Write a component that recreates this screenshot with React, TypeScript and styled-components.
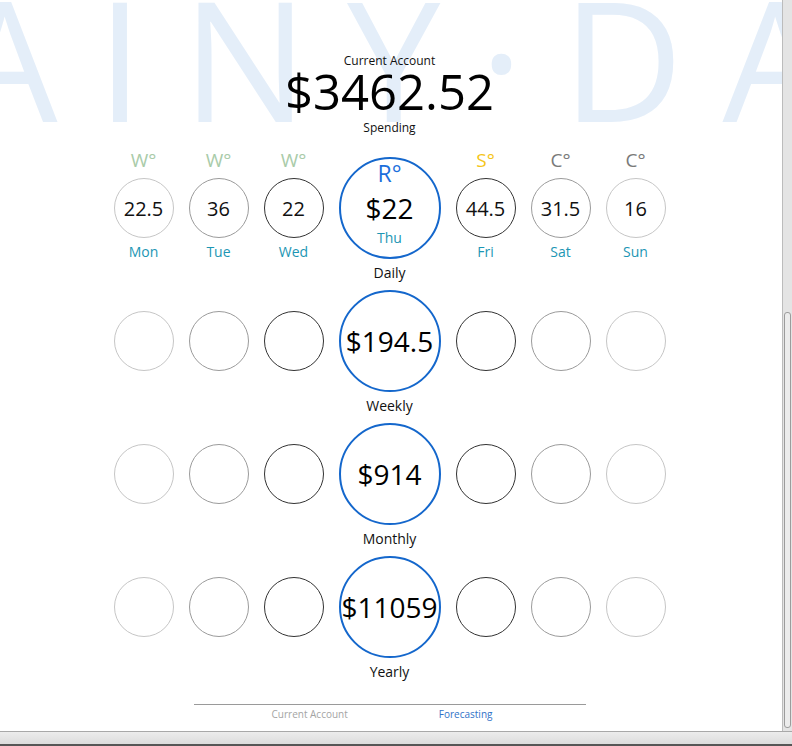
import React from 'react';
import styled, { createGlobalStyle } from 'styled-components';

const GlobalStyle = createGlobalStyle`
    html, body {
        margin: 0;
        padding: 0;
        background: #fff;
    }

    body {
        font-family: 'Open Sans', 'DejaVu Sans', sans-serif;
        color: #111;
    }
`;

type Tone = 'light' | 'mid' | 'dark';
type Weather = 'W' | 'R' | 'S' | 'C';

const toneColor: Record<Tone, string> = {
    light: '#c6c6c6',
    mid: '#9b9b9b',
    dark: '#333333',
};

const weatherColor: Record<Weather, string> = {
    W: '#a9cba9',
    R: '#1a6fdc',
    S: '#f5c518',
    C: '#7a7a7a',
};

interface Day {
    day: string;
    value: string;
    weather: Weather;
    tone: Tone;
}

const before: Day[] = [
    { day: 'Mon', value: '22.5', weather: 'W', tone: 'light' },
    { day: 'Tue', value: '36', weather: 'W', tone: 'mid' },
    { day: 'Wed', value: '22', weather: 'W', tone: 'dark' },
];

const after: Day[] = [
    { day: 'Fri', value: '44.5', weather: 'S', tone: 'dark' },
    { day: 'Sat', value: '31.5', weather: 'C', tone: 'mid' },
    { day: 'Sun', value: '16', weather: 'C', tone: 'light' },
];

const periods = [
    { label: 'Daily', amount: '$22', detailed: true },
    { label: 'Weekly', amount: '$194.5', detailed: false },
    { label: 'Monthly', amount: '$914', detailed: false },
    { label: 'Yearly', amount: '$11059', detailed: false },
];

const Window = styled.div`
    width: 792px;
    height: 746px;
    display: flex;
    flex-direction: column;
    overflow: hidden;
`;

const Viewport = styled.div`
    display: flex;
    height: 731px;
`;

const Main = styled.main`
    position: relative;
    width: 782px;
    overflow: hidden;
    background: #fff;
`;

// big faded brand text behind everything
const Backdrop = styled.div`
    position: absolute;
    left: -190px;
    top: -26px;
    font-size: 167px;
    line-height: 1;
    letter-spacing: 39px;
    white-space: nowrap;
    color: #e4eef9;
    pointer-events: none;
    user-select: none;
`;

const Content = styled.div`
    position: relative;
    display: flex;
    flex-direction: column;
    align-items: center;
    padding-right: 3px;
`;

const Header = styled.header`
    padding-top: 53px;
    margin-bottom: 21px;
    text-align: center;
`;

const Caption = styled.div`
    font-size: 12px;
    line-height: 16px;
    color: #111;
`;

const Balance = styled.div`
    font-size: 49px;
    line-height: 44px;
    color: #000;
    margin-bottom: 7px;
`;

const Section = styled.section`
    display: grid;
    grid-template-columns: repeat(3, 60px) 102px repeat(3, 60px);
    column-gap: 15px;
    align-items: center;
    justify-content: center;
    margin-bottom: 8px;
`;

const DayCell = styled.div`
    display: flex;
    flex-direction: column;
    align-items: center;
    margin: -28px 0;
`;

const WeatherMark = styled.div<{ $weather: Weather; $big?: boolean }>`
    font-size: ${(p) => (p.$big ? '23px' : '19px')};
    line-height: ${(p) => (p.$big ? '24px' : '20px')};
    height: ${(p) => (p.$big ? '24px' : '20px')};
    margin-bottom: ${(p) => (p.$big ? '0' : '8px')};
    color: ${(p) => weatherColor[p.$weather]};
`;

const Ring = styled.div<{ $tone: Tone }>`
    box-sizing: border-box;
    width: 60px;
    height: 60px;
    border-radius: 50%;
    border: 1px solid ${(p) => toneColor[p.$tone]};
    display: flex;
    align-items: center;
    justify-content: center;
    font-size: 20px;
    color: #111;
`;

const DayName = styled.div<{ $big?: boolean }>`
    font-size: 14px;
    line-height: 18px;
    margin-top: ${(p) => (p.$big ? '4px' : '5px')};
    padding-bottom: ${(p) => (p.$big ? '0' : '5px')};
    color: #1c96b4;
`;

const BigRing = styled.div<{ $detailed: boolean }>`
    box-sizing: border-box;
    width: 102px;
    height: 102px;
    border-radius: 50%;
    border: 2px solid #1467cc;
    display: flex;
    flex-direction: column;
    align-items: center;
    justify-content: ${(p) => (p.$detailed ? 'flex-start' : 'center')};
    padding-top: ${(p) => (p.$detailed ? '2px' : '0')};
`;

const Amount = styled.div<{ $detailed: boolean }>`
    font-size: 28px;
    line-height: 34px;
    color: #000;
    margin-top: ${(p) => (p.$detailed ? '6px' : '0')};
    white-space: nowrap;
`;

const PeriodLabel = styled.div`
    grid-column: 4;
    grid-row: 2;
    justify-self: center;
    margin-top: 5px;
    font-size: 14px;
    line-height: 18px;
    color: #111;
`;

const Footer = styled.footer`
    width: 392px;
    margin-top: 15px;
    border-top: 1px solid #9a9a9a;
    display: flex;
    justify-content: center;
    gap: 91px;
    padding: 2px 15px 0 0;
    box-sizing: border-box;
    font-size: 10px;
    line-height: 14px;
`;

const Tab = styled.span<{ $active?: boolean }>`
    color: ${(p) => (p.$active ? '#2f72c8' : '#a4a4a4')};
`;

const VScroll = styled.div`
    width: 10px;
    box-sizing: border-box;
    background: #e4e4e4;
    border-left: 1px solid #bcbcbc;
    display: flex;
    flex-direction: column;
`;

const Thumb = styled.div`
    flex: 1;
    margin: 312px 1px 3px 1px;
    border: 1px solid #9c9c9c;
    border-radius: 3px;
    background: #ececec;
`;

const HScroll = styled.div`
    height: 15px;
    box-sizing: border-box;
    border-top: 1px solid #a8a8a8;
    border-bottom: 2px solid #565656;
    background: linear-gradient(#ececec, #dcdcdc);
`;

const SmallDay = ({ d, detailed }: { d: Day; detailed: boolean }) =>
    detailed ? (
        <DayCell>
            <WeatherMark $weather={d.weather}>{d.weather}°</WeatherMark>
            <Ring $tone={d.tone}>{d.value}</Ring>
            <DayName>{d.day}</DayName>
        </DayCell>
    ) : (
        <Ring $tone={d.tone} />
    );

export default function App() {
    return (
        <>
            <GlobalStyle />
            <Window>
                <Viewport>
                    <Main>
                        <Backdrop aria-hidden>RAINY·DAY</Backdrop>
                        <Content>
                            <Header>
                                <Caption>Current Account</Caption>
                                <Balance>$3462.52</Balance>
                                <Caption>Spending</Caption>
                            </Header>
                            {periods.map((p) => (
                                <Section key={p.label}>
                                    {before.map((d) => (
                                        <SmallDay key={d.day} d={d} detailed={p.detailed} />
                                    ))}
                                    <BigRing $detailed={p.detailed}>
                                        {p.detailed && (
                                            <WeatherMark $weather="R" $big>
                                                R°
                                            </WeatherMark>
                                        )}
                                        <Amount $detailed={p.detailed}>{p.amount}</Amount>
                                        {p.detailed && <DayName $big>Thu</DayName>}
                                    </BigRing>
                                    {after.map((d) => (
                                        <SmallDay key={d.day} d={d} detailed={p.detailed} />
                                    ))}
                                    <PeriodLabel>{p.label}</PeriodLabel>
                                </Section>
                            ))}
                            <Footer>
                                <Tab>Current Account</Tab>
                                <Tab $active>Forecasting</Tab>
                            </Footer>
                        </Content>
                    </Main>
                    <VScroll>
                        <Thumb />
                    </VScroll>
                </Viewport>
                <HScroll />
            </Window>
        </>
    );
}
